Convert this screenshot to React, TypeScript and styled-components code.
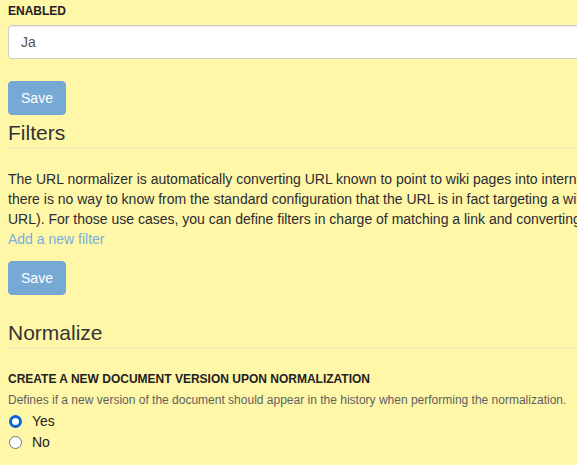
import React from "react";
import styled, { createGlobalStyle } from "styled-components";

const GlobalStyle = createGlobalStyle`
  html, body {
    margin: 0;
    padding: 0;
    background: #fff7a8;
    overflow: hidden;
  }
  body {
    font-family: "Liberation Sans", Arial, sans-serif;
    font-size: 14px;
    line-height: 20px;
    color: #333;
  }
`;

const Page = styled.div`
  width: 1000px;
  padding: 3px 0 0 8px;
`;

const FieldLabel = styled.div`
  font-size: 12px;
  font-weight: bold;
  line-height: 17px;
  text-transform: uppercase;
  color: #222;
`;

const Hint = styled.div`
  font-size: 12px;
  line-height: 17px;
  color: #5f5f5f;
  margin-top: 4px;
`;

const TextInput = styled.input`
  display: block;
  box-sizing: border-box;
  width: 100%;
  height: 34px;
  margin-top: 5px;
  padding: 6px 12px;
  border: 1px solid #ccc;
  border-radius: 4px;
  background: #fff;
  box-shadow: inset 0 1px 1px rgba(0, 0, 0, 0.075);
  font-family: inherit;
  font-size: 14px;
  color: #555;
  outline: none;
`;

const SaveButton = styled.button<{ $top: number }>`
  display: block;
  box-sizing: border-box;
  width: 58px;
  height: 34px;
  margin-top: ${(p) => p.$top}px;
  padding: 0;
  border: 1px solid #72a6d2;
  border-radius: 4px;
  background: #76aad5;
  color: #fff;
  font-family: inherit;
  font-size: 14px;
  cursor: pointer;
`;

const Heading = styled.h2<{ $top: number }>`
  margin: ${(p) => p.$top}px 0 0;
  padding-bottom: 2px;
  border-bottom: 1px solid #ece9c8;
  font-size: 21px;
  font-weight: normal;
  line-height: 25px;
  color: #333;
`;

const Paragraph = styled.p`
  margin: 21px 0 0;
  white-space: nowrap;
  color: #2b2b33;
`;

const AddLink = styled.a`
  display: block;
  color: #79aedb;
  text-decoration: none;
`;

const Field = styled.div`
  margin-top: 23px;
`;

const RadioRow = styled.label<{ $top: number }>`
  display: flex;
  align-items: center;
  height: 20px;
  margin-top: ${(p) => p.$top}px;
  color: #222;
`;

// drawn by hand so the checked ring looks like the thick blue one in the shot
const Radio = styled.input`
  appearance: none;
  box-sizing: border-box;
  width: 13px;
  height: 13px;
  margin: 0 10px 0 1px;
  border: 1px solid #767676;
  border-radius: 50%;
  background: #fff;

  &:checked {
    border: 3.5px solid #0b63d6;
  }
`;

const App = () => {
  return (
    <>
      <GlobalStyle />
      <Page>
        <FieldLabel>Enabled</FieldLabel>
        <TextInput defaultValue="Ja" />
        <SaveButton $top={22}>Save</SaveButton>

        <Heading $top={5}>Filters</Heading>
        <Paragraph>
          The URL normalizer is automatically converting URL known to point to wiki pages into internal links. However,
          <br />
          there is no way to know from the standard configuration that the URL is in fact targeting a wiki (e.g. when using a short
          <br />
          URL). For those use cases, you can define filters in charge of matching a link and converting it to a wiki link.
        </Paragraph>
        <AddLink href="#">Add a new filter</AddLink>
        <SaveButton $top={12}>Save</SaveButton>

        <Heading $top={25}>Normalize</Heading>
        <Field>
          <FieldLabel>Create a new document version upon normalization</FieldLabel>
          <Hint>
            Defines if a new version of the document should appear in the history when performing the normalization.
          </Hint>
          <RadioRow $top={2}>
            <Radio type="radio" name="normalize" defaultChecked />
            Yes
          </RadioRow>
          <RadioRow $top={1}>
            <Radio type="radio" name="normalize" />
            No
          </RadioRow>
        </Field>
      </Page>
    </>
  );
};

export default App;
